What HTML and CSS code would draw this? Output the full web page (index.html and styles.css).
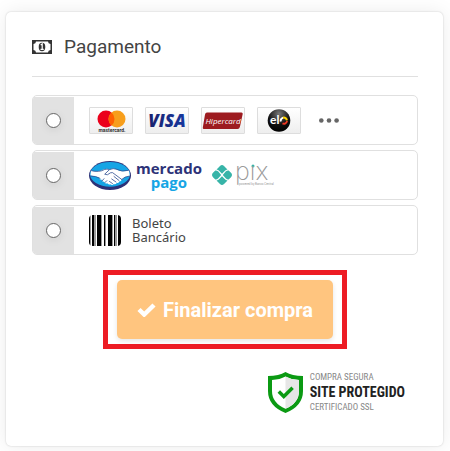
FILE: index.html
```html
<!DOCTYPE html>
<html lang="pt-BR">
<head>
<meta charset="utf-8">
<meta name="viewport" content="width=device-width, initial-scale=1">
<title>Pagamento</title>
<link rel="stylesheet" href="styles.css">
</head>
<body>
<main class="card">
  <header class="card-header">
    <svg class="money" width="20" height="14" viewBox="0 0 20 14" aria-hidden="true">
      <path fill="#333" fill-rule="evenodd" d="M0 0h20v14H0zM4 1.5A2.6 2.6 0 0 1 1.5 4v6A2.6 2.6 0 0 1 4 12.5h12A2.6 2.6 0 0 1 18.500 10V4A2.600 2.600 0 0 1 16 1.500z"/>
      <ellipse cx="10" cy="7" rx="3.300" ry="4.200" fill="#333"/>
      <path d="M8.700 4.900l1.500-1V9M8.500 9.300h3.200" fill="none" stroke="#fff" stroke-width="1.200"/>
    </svg>
    <h1 class="title">Pagamento</h1>
  </header>

  <form class="payment">
    <div class="options">
      <label class="option">
        <span class="pick"><input class="radio" type="radio" name="method" aria-label="Cartão de crédito"></span>
        <span class="brands cards">
          <span class="brand">
            <svg width="42" height="25" viewBox="0 0 42 25" role="img" aria-label="Mastercard">
              <circle cx="16" cy="11" r="8.500" fill="#eb001b"/>
              <circle cx="27" cy="11" r="8.500" fill="#f79e1b"/>
              <path d="M21.500 4.500a8.500 8.500 0 0 1 0 13 8.500 8.500 0 0 1 0-13z" fill="#ff5f00"/>
              <text class="mc-text" x="22" y="24" text-anchor="middle">mastercard.</text>
            </svg>
          </span>
          <span class="brand">
            <svg width="42" height="25" viewBox="0 0 42 25" role="img" aria-label="Visa">
              <defs><linearGradient id="visa" x1="0" x2="1"><stop offset="0" stop-color="#18206c"/><stop offset="1" stop-color="#1638a0"/></linearGradient></defs>
              <text class="visa-text" x="21" y="19" text-anchor="middle" fill="url(#visa)">VISA</text>
            </svg>
          </span>
          <span class="brand">
            <svg width="42" height="25" viewBox="0 0 42 25" role="img" aria-label="Hipercard">
              <path d="M5 4.500h34.500q1.500 0 1.200 1.500l-2.700 12.500q-.5 2.500-2.500 2.500H2q-1.500 0-1.200-1.500L3 6.500q.4-2 2-2z" fill="#9d1b20"/>
              <text class="hiper-text" x="21" y="16" text-anchor="middle">Hipercard</text>
            </svg>
          </span>
          <span class="brand">
            <svg width="42" height="25" viewBox="0 0 42 25" role="img" aria-label="Elo">
              <defs><radialGradient id="elo" cx=".5" cy=".2" r=".8"><stop offset="0" stop-color="#777"/><stop offset=".6" stop-color="#111"/><stop offset="1" stop-color="#000"/></radialGradient></defs>
              <circle cx="21" cy="12.500" r="11.300" fill="url(#elo)"/>
              <text class="elo-text" x="12" y="16">el</text>
              <g fill="none" stroke-width="2"><path d="M22.800 13.500a3.100 3.100 0 0 1 2.400-3.800" stroke="#fff"/><path d="M25 9.700a3.100 3.100 0 0 1 3.900 2.700" stroke="#ffd400"/><path d="M29 13a3.100 3.100 0 0 1-4.500 2.400" stroke="#ee3824"/></g>
            </svg>
          </span>
          <svg class="more" width="20" height="5" viewBox="0 0 20 5" role="img" aria-label="Outros cartões" fill="#666"><circle cx="2.300" cy="2.500" r="2.300"/><circle cx="10" cy="2.500" r="2.300"/><circle cx="17.600" cy="2.500" r="2.300"/></svg>
        </span>
      </label>

      <label class="option">
        <span class="pick"><input class="radio" type="radio" name="method" aria-label="Mercado Pago ou Pix"></span>
        <span class="brands wallets">
          <svg width="42" height="29" viewBox="0 0 42 29" aria-hidden="true">
            <ellipse cx="21" cy="14.500" rx="21" ry="14.500" fill="#2d3277"/>
            <ellipse cx="21" cy="13.300" rx="20" ry="12.400" fill="#16a5e5"/>
            <path d="M2 9.500q7.500 2.200 13-1.200 3-1.300 6 .2 3-1.600 6-.3 5.500 3.300 13 1.100l.8 5.700q-5 .4-8 3.700-.7 2-2.500 1.800-.6 1.800-2.600 1.500-1 1.800-2.800 1-1.700 1.700-3.600.2-2 .8-3-.9-2.700.7-3.200-1.500-2.400.1-2.500-2-2.500-.1-2.500-2.300-4.500-1.500-8.700-2z" fill="#fff"/>
            <path d="M2.500 9.700q7.500 2 13-1.200 2.500-.9 5 .1l-4.800 4.600q2.500 1.800 5.800-1.400l2-.2 9.300 6.900M21 8.400q3.500-1.500 6-.3 5.500 3.300 12.500 1.300M1.500 15q5.500-.1 9.500 2.300M40.500 15q-5 .5-7.700 3.300M25 15.500l5 4M22.700 18l4.300 3M20.500 20.500l3 2M13 20l2-2.300M15.800 21.700l2-2" fill="none" stroke="#2d4c91" stroke-width=".8" stroke-linecap="round"/>
          </svg>
          <span class="mp-name"><span class="mp-top">mercado</span><span class="mp-bottom">pago</span></span>
          <svg class="pix" width="60" height="20" viewBox="0 0 60 20" role="img" aria-label="Pix, powered by Banco Central">
            <g fill="#37b4a8"><path d="M10 0q1 0 2 1l3.500 3.500q-1.700.3-2.800 1.500L10 8.700 7.300 6Q6.200 4.800 4.500 4.500L8 1q1-1 2-1zM10 20q1 0 2-1l3.500-3.500q-1.700-.3-2.800-1.500L10 11.300 7.300 14q-1.100 1.200-2.800 1.500L8 19q1 1 2 1z"/><path d="M3.300 5.400q1.800-.1 3 1L9.200 10l-2.900 3.300q-1.200 1.300-3 1.200L1 12.200Q-1 10 1 7.800zM16.700 5.400q-1.800-.1-3 1L10.800 10l2.900 3.300q1.200 1.300 3 1.200l2.300-2.300q2-2.200 0-4.400z"/><circle cx="41" cy="1" r="1.500"/></g>
            <text class="pix-text" x="23" y="15">pıx</text>
            <text class="pix-small" x="27" y="20">powered by Banco Central</text>
          </svg>
        </span>
      </label>

      <label class="option">
        <span class="pick"><input class="radio" type="radio" name="method"></span>
        <span class="brands boleto">
          <svg width="32" height="31" viewBox="0 0 32 31" aria-hidden="true">
            <defs><clipPath id="bars"><rect width="32" height="31" rx="4"/></clipPath></defs>
            <g clip-path="url(#bars)" fill="#000"><path d="M0 0h1v31H0zM3 0h2v31H3zM8 0h4v31H8zM15 0h1v31h-1zM19 0h4v31h-4zM25 0h1v31h-1zM29 0h3v31h-3z"/><path fill="#999" d="M1 0h1v31H1zM5 0h2v31H5zM12 0h1v31h-1zM16 0h1v31h-1zM23 0h1v31h-1zM26 0h2v31h-2z"/></g>
          </svg>
          <span class="boleto-name">Boleto<br>Bancário</span>
        </span>
      </label>
    </div>

    <div class="highlight">
      <button class="submit" type="button">
        <svg width="19" height="14" viewBox="0 0 19 14" aria-hidden="true"><path d="M2 6.500l5.200 5L17 2" fill="none" stroke="#fff" stroke-width="4.500"/></svg>
        Finalizar compra
      </button>
    </div>
  </form>

  <footer class="seal">
    <svg width="35" height="41" viewBox="0 0 35 41" aria-hidden="true">
      <path d="M17.500 0Q24 4 35 4v15q0 15-17.500 22Q0 34 0 19V4q11 0 17.500-4z" fill="#0b9a13"/>
      <path d="M17.500 4.500Q23 7.500 31 8v11q0 12-13.500 17.800Q4 31 4 19V8q8-.5 13.500-3.500z" fill="#fff"/>
      <path d="M17.500 4.500Q23 7.500 31 8v11q0 12-13.500 17.800z" fill="#e6e6e6"/>
      <path d="M10.800 19.500l5 5 8.800-8.700" fill="none" stroke="#0b9a13" stroke-width="3.500"/>
    </svg>
    <div class="seal-text">
      <span class="seal-small">COMPRA SEGURA</span>
      <strong class="seal-main">SITE PROTEGIDO</strong>
      <span class="seal-small">CERTIFICADO SSL</span>
    </div>
  </footer>
</main>
</body>
</html>
```
FILE: styles.css
```css
* {
  box-sizing: border-box;
}

body {
  margin: 0;
  padding: 12px 7px 5px 6px;
  background: #fff;
  color: #333;
  font-family: Roboto, "Liberation Sans", sans-serif;
}

svg {
  display: block;
  flex: none;
}

.card {
  padding: 16px 25px 33px 26px;
  border-radius: 5px;
  background: #fff;
  box-shadow: 0 0 2px rgba(0, 0, 0, 0.2), 0 0 20px rgba(0, 0, 0, 0.08);
}

.card-header {
  display: flex;
  align-items: center;
  gap: 12px;
  height: 49px;
  padding-bottom: 10px;
  border-bottom: 1px solid #e0e0e0;
}

.title {
  margin: 0;
  color: #444;
  font-size: 19px;
  line-height: 24px;
  font-weight: 400;
}

.options {
  display: grid;
  gap: 5px;
  margin-top: 18px;
}

.option {
  display: flex;
  height: 50px;
  border: 1px solid #e0e0e0;
  border-radius: 5px;
  overflow: hidden;
}

.pick {
  display: flex;
  flex: none;
  align-items: center;
  justify-content: center;
  width: 41px;
  margin-top: 1px;
  background: #e2e2e2;
}

.radio {
  appearance: none;
  width: 15px;
  height: 15px;
  margin: 0;
  border: 1px solid #666;
  border-radius: 50%;
  background: #fff;
  box-shadow: 0 2px 8px rgba(0, 0, 0, 0.08);
}

.radio:checked {
  box-shadow: inset 0 0 0 3px #fff;
  background: #333;
}

.brands {
  display: flex;
  align-items: center;
  padding-left: 15px;
}

.cards {
  gap: 12px;
}

.brand {
  border: 1px solid #ddd;
  border-radius: 1px;
  background: linear-gradient(#fff, #eee);
}

.more {
  margin-left: 6px;
}

.mc-text {
  font: 700 5px Roboto, sans-serif;
  fill: #333;
}

.visa-text {
  font: italic 800 17px "Open Sans", sans-serif;
}

.hiper-text {
  font: italic 400 8px "Open Sans", sans-serif;
  fill: #fff;
}

.elo-text {
  font: 700 12px Lato, sans-serif;
  fill: #fff;
}

.wallets {
  gap: 5px;
}

.mp-name {
  display: grid;
  justify-items: center;
  margin-right: 5px;
  font: 700 15px/14px "Open Sans", sans-serif;
}

.mp-top {
  color: #2d3277;
}

.mp-bottom {
  color: #16a5e5;
}

.pix {
  overflow: visible;
}

.pix-text {
  font: 200 25px Inter, sans-serif;
  fill: #999;
}

.pix-small {
  font: 3px Roboto, sans-serif;
  fill: #999;
}

.boleto {
  gap: 11px;
}

.boleto-name {
  color: #444;
  font: 13px/14px "Noto Sans", sans-serif;
}

.highlight {
  width: fit-content;
  margin: 15px auto 0;
  padding: 5px 9px;
  border: 5px solid #ed1c24;
}

.submit {
  display: flex;
  align-items: center;
  gap: 7px;
  height: 59px;
  padding: 0 20px;
  border: 0;
  border-radius: 5px;
  background: #ffc57f;
  box-shadow: 0 2px 5px rgba(0, 0, 0, 0.1);
  color: #fff;
  font: 700 20px/24px Roboto, sans-serif;
}

.seal {
  display: flex;
  align-items: center;
  justify-content: flex-end;
  gap: 7px;
  margin-top: 22px;
  padding-right: 13px;
}

.seal-text {
  display: grid;
  font-family: "Roboto Condensed", "Liberation Sans Narrow", "Liberation Sans", sans-serif;
}

.seal-small {
  color: #888;
  font-size: 9px;
  line-height: 12px;
}

.seal-main {
  color: #222;
  font-size: 14px;
  line-height: 18px;
}
```
